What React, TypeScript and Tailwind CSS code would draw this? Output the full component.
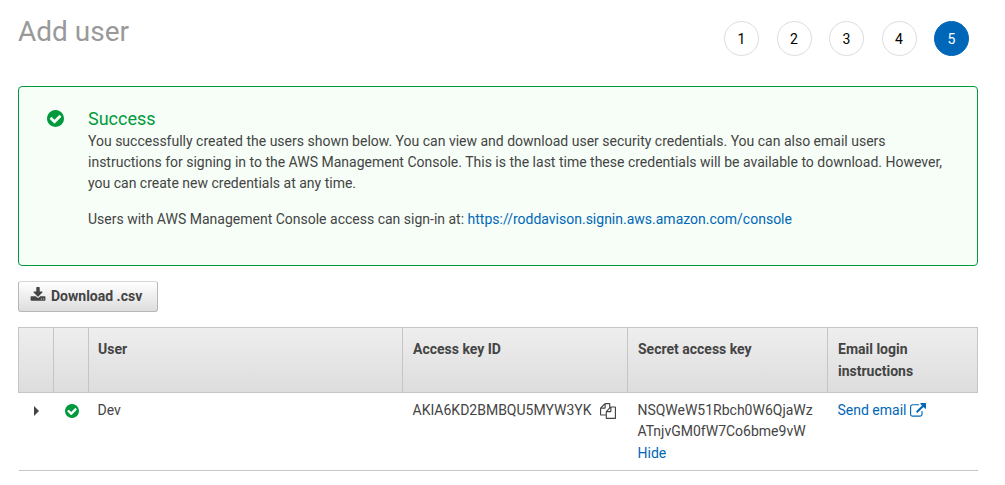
import React from "react";

type IconProps = { className?: string };

function Icon({ className, d }: IconProps & { d: string }) {
  return (
    <svg viewBox="0 0 1792 1792" fill="currentColor" aria-hidden="true" className={className}>
      <path d={d} />
    </svg>
  );
}

function CheckCircle({ className }: IconProps) {
  return (
    <svg viewBox="128 128 1536 1536" fill="currentColor" aria-hidden="true" className={className}>
      <path d="M1412 734q0-28-18-46l-91-90q-19-19-45-19t-45 19l-408 407-226-226q-19-19-45-19t-45 19l-91 90q-18 18-18 46 0 27 18 45l362 362q19 19 45 19 27 0 46-19l543-543q18-18 18-45zm252 162q0 209-103 385.5t-279.5 279.5-385.5 103-385.5-103-279.5-279.5-103-385.5 103-385.5 279.5-279.5 385.5-103 385.5 103 279.5 279.5 103 385.5z" />
    </svg>
  );
}

const downloadPath =
  "M1344 1344q0-26-19-45t-45-19-45 19-19 45 19 45 45 19 45-19 19-45zm256 0q0-26-19-45t-45-19-45 19-19 45 19 45 45 19 45-19 19-45zm128-224v320q0 40-28 68t-68 28h-1472q-40 0-68-28t-28-68v-320q0-40 28-68t68-28h465l135 136q58 56 136 56t136-56l136-136h464q40 0 68 28t28 68zm-325-569q17 41-14 70l-448 448q-18 19-45 19t-45-19l-448-448q-31-29-14-70 17-39 59-39h256v-448q0-26 19-45t45-19h256q26 0 45 19t19 45v448h256q42 0 59 39z";

const copyPath =
  "M1696 384q40 0 68 28t28 68v1216q0 40-28 68t-68 28h-960q-40 0-68-28t-28-68v-288h-544q-40 0-68-28t-28-68v-672q0-40 20-88t48-76l408-408q28-28 76-48t88-20h416q40 0 68 28t28 68v328q68-40 128-40h416zm-544 213l-299 299h299v-299zm-640-384l-299 299h299v-299zm196 647l316-316v-416h-384v416q0 40-28 68t-68 28h-416v640h512v-256q0-40 20-88t48-76zm956 804v-1152h-384v416q0 40-28 68t-68 28h-416v640h896z";

const externalLinkPath =
  "M1408 928v320q0 119-84.5 203.5t-203.5 84.5h-832q-119 0-203.5-84.5t-84.5-203.5v-832q0-119 84.5-203.5t203.5-84.5h704q14 0 23 9t9 23v64q0 14-9 23t-23 9h-704q-66 0-113 47t-47 113v832q0 66 47 113t113 47h832q66 0 113-47t47-113v-320q0-14 9-23t23-9h64q14 0 23 9t9 23zm384-864v512q0 26-19 45t-45 19-45-19l-176-176-652 652q-10 10-23 10t-23-10l-114-114q-10-10-10-23t10-23l652-652-176-176q-19-19-19-45t19-45 45-19h512q26 0 45 19t19 45z";

const steps = [1, 2, 3, 4, 5];
const currentStep = 5;

function Steps() {
  return (
    <ol className="mt-1 mr-[9px] flex w-[245px] justify-between">
      {steps.map((step) => (
        <li
          key={step}
          aria-current={step === currentStep ? "step" : undefined}
          className={
            step === currentStep
              ? "flex size-[35px] items-center justify-center rounded-full border border-[#0067b8] bg-[#0067b8] pt-px text-white"
              : "flex size-[35px] items-center justify-center rounded-full border border-[#dddddd] pt-px text-black"
          }
        >
          {step}
        </li>
      ))}
    </ol>
  );
}

function SuccessAlert() {
  return (
    <section className="mt-[30px] flex rounded border border-[#009a3d] bg-[#f6fef7] pt-5 pr-7 pb-[35px] pl-7">
      <CheckCircle className="mt-[3px] mr-6 size-[17px] shrink-0 text-[#009a3d]" />
      <div>
        <h2 className="text-lg leading-6 text-[#009a3d]">Success</h2>
        <p>
          You successfully created the users shown below. You can view and download user security credentials. You can
          also email users instructions for signing in to the AWS Management Console. This is the last time these
          credentials will be available to download. However, you can create new credentials at any time.
        </p>
        <p className="mt-[15px]">
          Users with AWS Management Console access can sign-in at:{" "}
          <a href="https://roddavison.signin.aws.amazon.com/console" className="text-[#0067b8]">
            https://roddavison.signin.aws.amazon.com/console
          </a>
        </p>
      </div>
    </section>
  );
}

function UsersTable() {
  return (
    <table className="mt-[15px] w-full table-fixed border-collapse text-left align-top">
      <colgroup>
        <col className="w-[35px]" />
        <col className="w-[35px]" />
        <col />
        <col className="w-[225px]" />
        <col className="w-[200px]" />
        <col className="w-[150px]" />
      </colgroup>
      <thead>
        <tr className="bg-linear-to-b from-[#eeeeee] to-[#dddddd] align-top leading-[22px]">
          <th aria-label="Expand" className="border border-[#c5c5c5]" />
          <th aria-label="Status" className="border border-[#c5c5c5]" />
          <th className="border border-[#c5c5c5] px-[9px] py-[10px]">User</th>
          <th className="border border-[#c5c5c5] px-[10px] py-[10px]">Access key ID</th>
          <th className="border border-[#c5c5c5] px-[10px] py-[10px]">Secret access key</th>
          <th className="border border-[#c5c5c5] px-[10px] py-[10px]">Email login instructions</th>
        </tr>
      </thead>
      <tbody>
        <tr className="border-b border-[#c5c5c5] align-top">
          <td className="py-[7px] pl-px">
            <button type="button" aria-label="Expand Dev" className="flex h-[21px] w-full items-center justify-center">
              <svg viewBox="0 0 5 10" fill="currentColor" aria-hidden="true" className="h-[10px] w-[5px]">
                <path d="M0 0L5 5L0 10Z" />
              </svg>
            </button>
          </td>
          <td className="py-[7px] pl-px">
            <span className="flex h-[21px] items-center justify-center">
              <CheckCircle className="size-[14px] text-[#009a3d]" />
            </span>
          </td>
          <td className="px-[9px] py-[7px]">Dev</td>
          <td className="px-[10px] py-[7px]">
            <span className="flex items-center gap-[9px]">
              AKIA6KD2BMBQU5MYW3YK
              <button type="button" aria-label="Copy access key ID">
                <Icon d={copyPath} className="size-4" />
              </button>
            </span>
          </td>
          <td className="px-[10px] pt-[7px] pb-[6px]">
            <span className="block break-all">NSQWeW51Rbch0W6QjaWzATnjvGM0fW7Co6bme9vW</span>
            <button type="button" className="mt-px block text-[#0067b8]">
              Hide
            </button>
          </td>
          <td className="px-[10px] py-[7px]">
            <a href="#send-email" className="flex items-center gap-1 text-[#0067b8]">
              Send email
              <Icon d={externalLinkPath} className="size-4" />
            </a>
          </td>
        </tr>
      </tbody>
    </table>
  );
}

export default function App() {
  return (
    <main className="bg-white pt-[17px] pr-[27px] pl-[18px] font-[Roboto,sans-serif] text-sm leading-[21px] text-[#444444]">
      <header className="flex items-start justify-between">
        <h1 className="text-[28px] leading-[30px] text-[#999999]">Add user</h1>
        <Steps />
      </header>
      <SuccessAlert />
      <button
        type="button"
        className="mt-[15px] flex h-[31px] items-center rounded-[3px] border border-[#b7b7b7] border-t-[#d5d5d5] bg-linear-to-b from-white to-[#dddddd] pr-[15px] pl-[11px] font-bold"
      >
        <Icon d={downloadPath} className="mr-[5px] mb-1 size-4" />
        Download .csv
      </button>
      <UsersTable />
    </main>
  );
}
